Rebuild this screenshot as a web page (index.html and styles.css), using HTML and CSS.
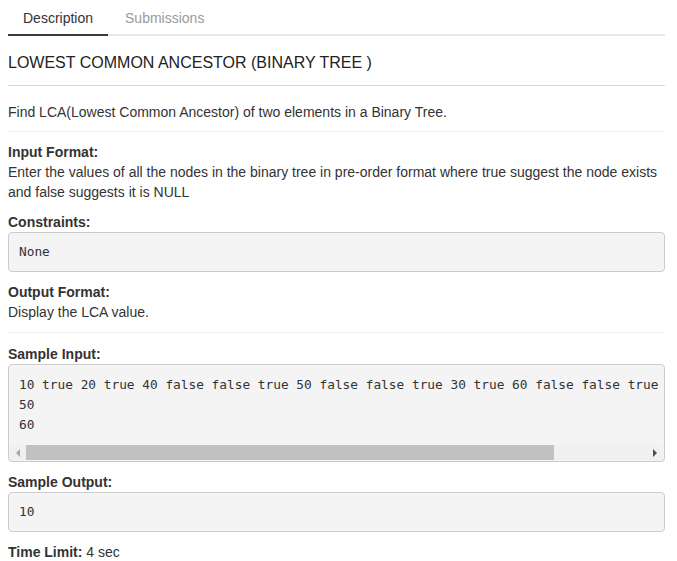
FILE: index.html
```html
<!DOCTYPE html>
<html lang="en">
<head>
    <meta charset="UTF-8">
    <meta name="viewport" content="width=device-width, initial-scale=1.0">
    <title>Lowest Common Ancestor</title>
    <link rel="stylesheet" href="styles.css">
</head>
<body>
    <div class="problem">
        <!-- Tabs -->
        <div class="tabs">
            <a class="tab active">Description</a>
            <a class="tab">Submissions</a>
        </div>

        <h3 class="title">LOWEST COMMON ANCESTOR (BINARY TREE )</h3>

        <p class="intro">Find LCA(Lowest Common Ancestor) of two elements in a Binary Tree.</p>

        <div class="section">
            <div class="label">Input Format:</div>
            <div>Enter the values of all the nodes in the binary tree in pre-order format where true suggest the node exists and false suggests it is NULL</div>
        </div>

        <div class="section">
            <div class="label">Constraints:</div>
            <pre class="code">None</pre>
        </div>

        <div class="section bordered">
            <div class="label">Output Format:</div>
            <div>Display the LCA value.</div>
        </div>

        <div class="section sample">
            <div class="label">Sample Input:</div>
            <div class="code-box">
                <pre class="code-lines">10 true 20 true 40 false false true 50 false false true 30 true 60 false false true 70 false false
50
60</pre>
                <div class="scrollbar">
                    <span class="arrow left"></span>
                    <div class="track"><div class="thumb"></div></div>
                    <span class="arrow right"></span>
                </div>
            </div>
        </div>

        <div class="section">
            <div class="label">Sample Output:</div>
            <pre class="code">10</pre>
        </div>

        <div class="section">
            <b class="label-inline">Time Limit:</b> 4 sec
        </div>
    </div>
</body>
</html>
```

FILE: styles.css
```css
body {
    margin: 0 8px;
    font-family: "Liberation Sans", Arial, sans-serif;
    font-size: 14px;
    line-height: 20px;
    color: #333;
    background: #ffffff;
}

.problem {
    width: 657px;
}

.tabs {
    display: flex;
    border-bottom: 2px solid #e8e8e8;
    height: 34px;
}

.tab {
    padding: 8px 15px 0;
    height: 26px;
    color: #9a9a9a;
    margin-bottom: -2px;
    border-bottom: 2px solid transparent;
    margin-right: 2px;
}

.tab.active {
    color: #333;
    border-bottom-color: #343a40;
}

.title {
    margin: 0;
    padding: 16px 0 11px;
    font-size: 16px;
    font-weight: normal;
    line-height: 22px;
    color: #222;
    border-bottom: 1px solid #d9d9d9;
}

.intro {
    margin: 0;
    padding: 16px 0 9px;
    border-bottom: 1px solid #eeeeee;
}

.section {
    margin-top: 10px;
}

.section.bordered {
    padding-bottom: 10px;
    border-bottom: 1px solid #eeeeee;
}

.section.sample {
    margin-top: 11px;
}

.label,
.label-inline {
    font-weight: bold;
    color: #333;
}

.code {
    margin: 0;
    padding: 9px 10px;
    background: #f4f4f4;
    border: 1px solid #cccccc;
    border-radius: 4px;
    font-family: "DejaVu Sans Mono", "Liberation Mono", monospace;
    font-size: 12.8px;
    line-height: 20px;
    color: #333;
}

.code-box {
    background: #f4f4f4;
    border: 1px solid #cccccc;
    border-radius: 4px;
    overflow: hidden;
}

.code-lines {
    margin: 0;
    padding: 10px 10px 10px;
    overflow: hidden;
    white-space: pre;
    font-family: "DejaVu Sans Mono", "Liberation Mono", monospace;
    font-size: 12.8px;
    line-height: 20px;
    color: #333;
}

.scrollbar {
    display: flex;
    align-items: center;
    height: 15px;
    margin: 0 1px 1px;
    background: #f0f0f0;
}

.arrow {
    width: 16px;
    height: 15px;
    display: flex;
    align-items: center;
    justify-content: center;
}

.arrow::before {
    content: "";
    border-top: 4px solid transparent;
    border-bottom: 4px solid transparent;
}

.arrow.left::before {
    border-right: 4px solid #a8a8a8;
}

.arrow.right::before {
    border-left: 4px solid #505050;
}

.track {
    flex: 1;
    height: 15px;
}

.thumb {
    width: 85%;
    height: 15px;
    background: #c1c1c1;
}
```
